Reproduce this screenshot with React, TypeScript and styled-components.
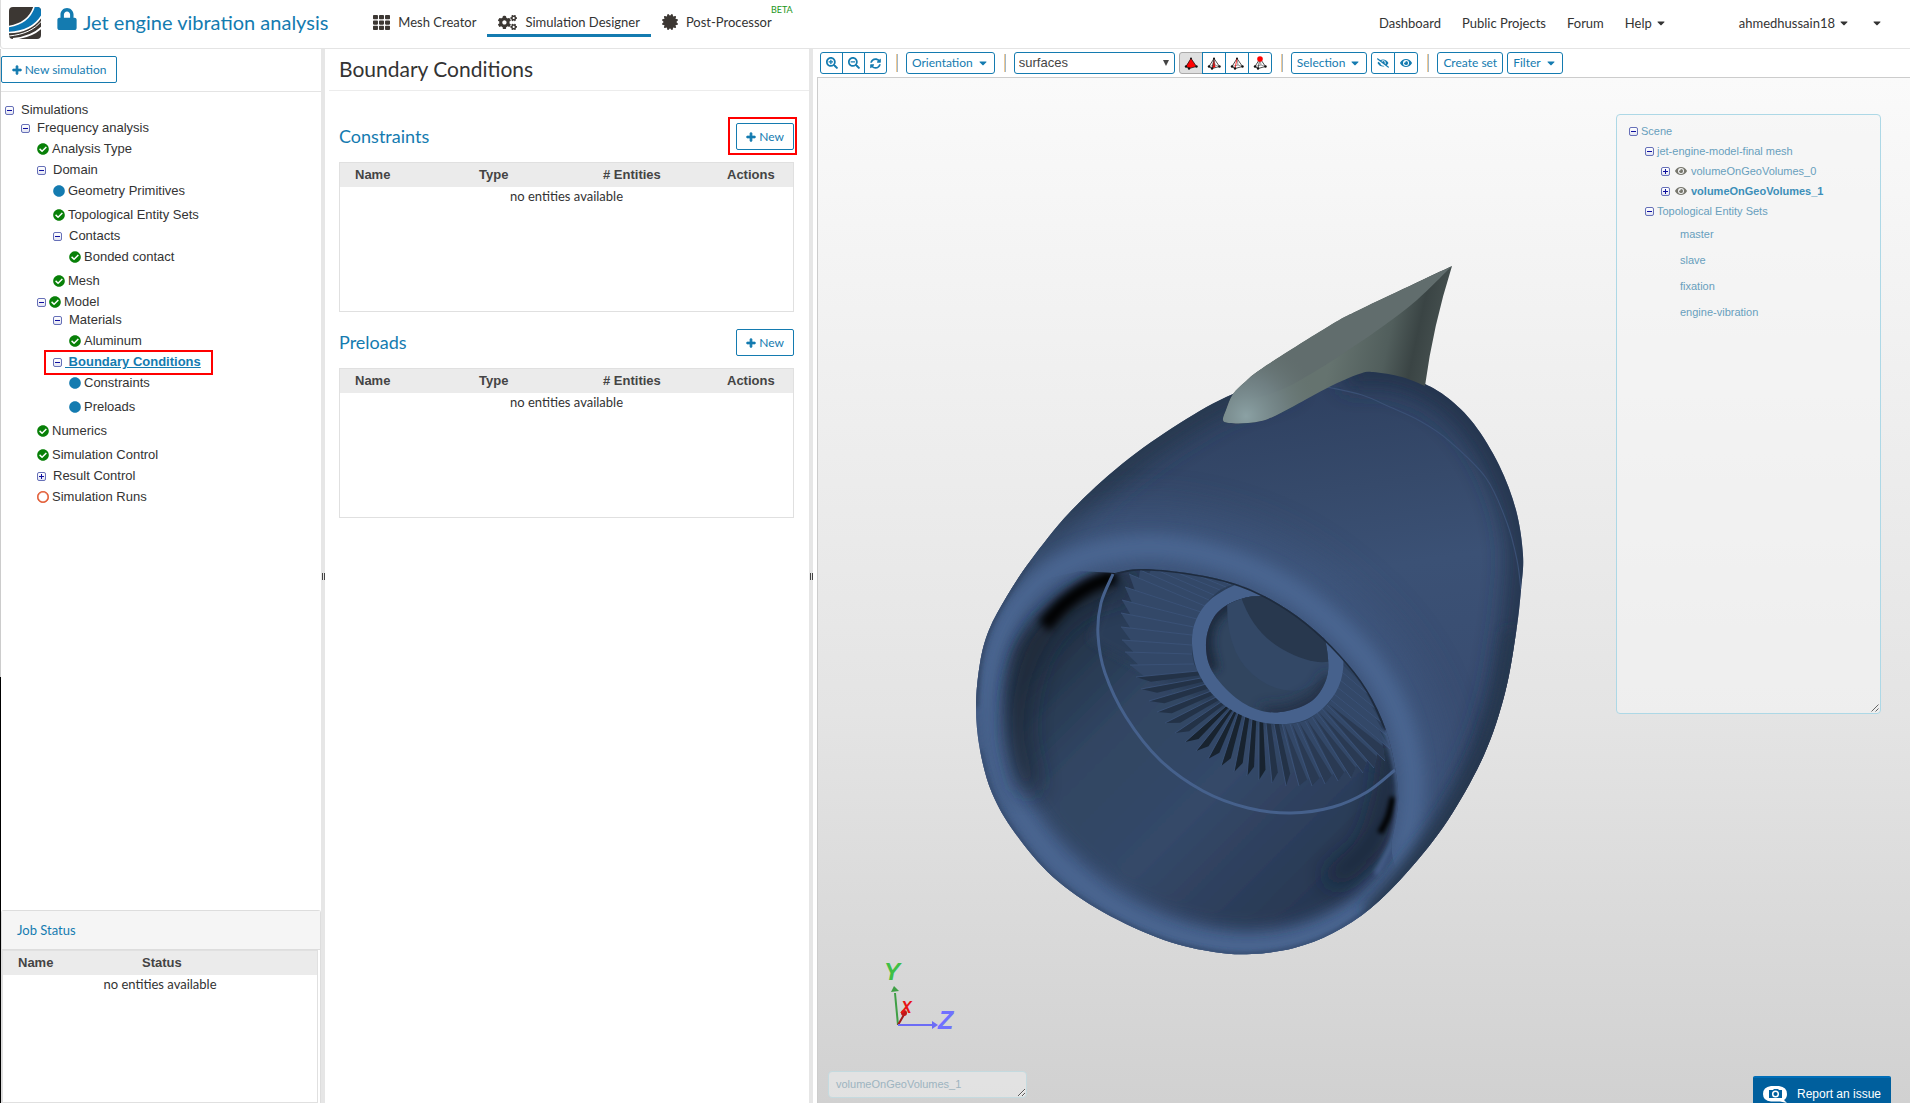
import React from 'react';
import styled, { createGlobalStyle, css } from 'styled-components';
import {
  FaLock, FaTh, FaCogs, FaCertificate, FaPlus, FaCheckCircle, FaCircle, FaRegCircle,
  FaSearchPlus, FaSearchMinus, FaSyncAlt, FaEye, FaEyeSlash, FaCaretDown,
} from 'react-icons/fa';

const BLUE = '#147bb0';
const TEXT = '#333333';
const LATO = 'Lato, "Open Sans", sans-serif';
const ARIAL = '"Liberation Sans", Arial, sans-serif';

const GlobalStyle = createGlobalStyle`
  *, *::before, *::after { box-sizing: border-box; }
  body { margin: 0; background: #fff; color: ${TEXT}; font: 13px/20px ${LATO}; }
  h1, h2, h3, ul { margin: 0; padding: 0; font-weight: 400; }
  ul { list-style: none; }
  a { color: inherit; text-decoration: none; }
  svg { display: block; flex: none; }
  button, select, textarea { font: inherit; color: inherit; }
`;

/* ---------- page frame ---------- */

const Page = styled.div`
  display: flex;
  flex-direction: column;
  height: 100vh;
  overflow: hidden;
`;

const Header = styled.header`
  display: flex;
  align-items: flex-start;
  height: 49px;
  padding: 0 27px 0 8px;
  border-bottom: 1px solid #e4e4e4;
  border-left: 1px solid #ddd;
  border-radius: 0 0 0 4px;
  flex: none;
`;

const Columns = styled.div`
  display: grid;
  grid-template-columns: 321px 4px 484px 4px 1fr;
  flex: 1;
  min-height: 0;
`;

const Splitter = styled.div`
  display: flex;
  align-items: center;
  justify-content: center;
  gap: 1px;
  background: #e6e6e6;
  i { width: 1px; height: 7px; background: #444; }
`;

/* ---------- header ---------- */

const Logo = styled.a`
  padding-top: 7px;
`;

const Title = styled.h1`
  display: flex;
  gap: 5px;
  margin-left: 15px;
  padding-top: 8px;
  color: ${BLUE};
  font-size: 20px;
  line-height: 28px;
`;

const MainNav = styled.nav`
  display: flex;
  margin-left: 34px;
`;

const NavItem = styled.a<{ $active?: boolean }>`
  position: relative;
  display: flex;
  align-items: center;
  gap: 8px;
  height: 37px;
  padding: 12px 11px 2px;
  border-bottom: 3px solid ${p => (p.$active ? BLUE : 'transparent')};
`;

const Beta = styled.sup`
  position: absolute;
  top: 4px;
  right: -10px;
  color: #1a961a;
  font-size: 9px;
  line-height: 12px;
`;

const UserNav = styled.nav`
  display: flex;
  gap: 21px;
  margin-left: auto;
  padding-top: 13px;
  a { display: flex; align-items: center; gap: 3px; }
`;

const UserLink = styled.a`
  margin-left: 51px;
`;

const MenuToggle = styled.button`
  margin: 0;
  padding: 0;
  border: 0;
  background: none;
`;

/* ---------- shared controls ---------- */

const Button = styled.button`
  display: flex;
  align-items: center;
  justify-content: center;
  gap: 3px;
  height: 27px;
  padding: 0 10px;
  border: 1px solid ${BLUE};
  border-radius: 2px;
  background: #fff;
  color: ${BLUE};
  font-size: 12px;
  line-height: 18px;
  white-space: nowrap;
`;

const RedFrame = css`
  &::after {
    content: '';
    position: absolute;
    border: 2px solid #f00;
    pointer-events: none;
  }
`;

/* ---------- simulation tree ---------- */

const Sidebar = styled.aside`
  display: flex;
  flex-direction: column;
  min-height: 0;
  border-left: 1px solid #ccc;
  border-image: linear-gradient(#ccc 0 628px, #000 628px) 1;
`;

const SidebarTop = styled.div`
  display: flex;
  padding: 7px 0 8px;
  border-bottom: 1px solid #e4e4e4;
`;

const NewSimulation = styled(Button)`
  width: 116px;
`;

const Tree = styled.ul`
  flex: 1;
  padding-top: 9px;
  font: 13px/18px ${ARIAL};
`;

const TreeRow = styled.li<{ $level: number; $leaf: boolean; $selected?: boolean }>`
  position: relative;
  display: flex;
  align-items: center;
  width: max-content;
  height: ${p => (p.$leaf ? 24 : 18)}px;
  margin-left: ${p => 4 + p.$level * 16}px;
  svg + a { margin-left: 3px; }
  button + a { margin-left: 7px; }
  button + svg { margin-left: 3px; }
  ${p => p.$selected && css`
    color: ${BLUE};
    font-weight: 700;
    button + a { margin-left: 3px; text-decoration: underline; white-space: pre; }
    ${RedFrame}
    &::after { inset: -3px -12px -4px -9px; }
  `}
`;

const Toggle = styled.button`
  display: flex;
  align-items: center;
  justify-content: center;
  width: 9px;
  height: 9px;
  padding: 0;
  border: 1px solid #6670b8;
  border-radius: 2px;
  background: linear-gradient(#fff, #e2e4f2);
`;

const Expander = ({ open, label }: { open: boolean; label: string }) => (
  <Toggle type="button" aria-label={label} aria-expanded={open}>
    <svg width="5" height="5" viewBox="0 0 5 5" shapeRendering="crispEdges">
      <rect x="0" y="2" width="5" height="1" fill="#1010a0" />
      {!open && <rect x="2" y="0" width="1" height="5" fill="#1010a0" />}
    </svg>
  </Toggle>
);

type Kind = 'open' | 'closed' | 'ok' | 'dot' | 'ring' | 'openOk';
const TREE: { text: string; level: number; kind: Kind; selected?: boolean }[] = [
  { text: 'Simulations', level: 0, kind: 'open' },
  { text: 'Frequency analysis', level: 1, kind: 'open' },
  { text: 'Analysis Type', level: 2, kind: 'ok' },
  { text: 'Domain', level: 2, kind: 'open' },
  { text: 'Geometry Primitives', level: 3, kind: 'dot' },
  { text: 'Topological Entity Sets', level: 3, kind: 'ok' },
  { text: 'Contacts', level: 3, kind: 'open' },
  { text: 'Bonded contact', level: 4, kind: 'ok' },
  { text: 'Mesh', level: 3, kind: 'ok' },
  { text: 'Model', level: 2, kind: 'openOk' },
  { text: 'Materials', level: 3, kind: 'open' },
  { text: 'Aluminum', level: 4, kind: 'ok' },
  { text: 'Boundary Conditions', level: 3, kind: 'open', selected: true },
  { text: 'Constraints', level: 4, kind: 'dot' },
  { text: 'Preloads', level: 4, kind: 'dot' },
  { text: 'Numerics', level: 2, kind: 'ok' },
  { text: 'Simulation Control', level: 2, kind: 'ok' },
  { text: 'Result Control', level: 2, kind: 'closed' },
  { text: 'Simulation Runs', level: 2, kind: 'ring' },
];

/* ---------- tables ---------- */

const JobPanel = styled.section`
  display: flex;
  flex-direction: column;
  height: 193px;
  border: 1px solid #ddd;
  border-bottom: 0;
  border-radius: 3px 3px 0 0;
`;

const JobTitle = styled.h3`
  padding: 9px 15px;
  border-bottom: 1px solid #ddd;
  background: #f5f5f5;
  color: ${BLUE};
  font-size: 13px;
  line-height: 20px;
`;

const TableFrame = styled.div<{ $height?: number }>`
  border: 1px solid #e0e0e0;
  ${p => (p.$height ? `height: ${p.$height}px;` : 'flex: 1; margin-right: 2px;')}
`;

const Table = styled.table<{ $pad: number }>`
  width: 100%;
  border-collapse: collapse;
  table-layout: fixed;
  th {
    width: 124px;
    height: 24px;
    padding: 0 0 0 ${p => p.$pad}px;
    background: #ebebeb;
    color: #444;
    font: 700 13px/18px ${ARIAL};
    text-align: left;
    white-space: nowrap;
  }
  th:last-child { width: auto; }
  td { padding: 0; line-height: 18px; text-align: center; }
`;

const EntityTable = ({ heads, pad, label }: { heads: string[]; pad: number; label: string }) => (
  <Table $pad={pad} aria-label={label}>
    <thead><tr>{heads.map(h => <th key={h} scope="col">{h}</th>)}</tr></thead>
    <tbody><tr><td colSpan={heads.length}>no entities available</td></tr></tbody>
  </Table>
);

/* ---------- middle column ---------- */

const Middle = styled.main`
  padding-left: 4px;
`;

const PanelTitle = styled.h2`
  padding: 6px 10px 7px;
  border-bottom: 1px solid #ececec;
  font-size: 21px;
  line-height: 28px;
`;

const Sections = styled.div`
  display: grid;
  gap: 17px;
  padding: 32px 15px 0 10px;
`;

const SectionHead = styled.div`
  display: flex;
  align-items: flex-start;
  justify-content: space-between;
  margin-bottom: 12px;
  h3 { color: ${BLUE}; font-size: 18px; line-height: 26px; }
`;

const ButtonHolder = styled.div<{ $marked?: boolean }>`
  position: relative;
  width: 58px;
  button { width: 100%; }
  ${p => p.$marked && RedFrame}
  &::after { inset: -6px -3px -5px -8px; }
`;

/* ---------- toolbar ---------- */

const Viewer = styled.section`
  display: flex;
  flex-direction: column;
  min-width: 0;
  padding-left: 4px;
`;

const Toolbar = styled.div`
  display: flex;
  align-items: center;
  height: 28px;
  padding-left: 3px;
  gap: 4px;
`;

const ToolButton = styled(Button)<{ $pressed?: boolean }>`
  height: 22px;
  padding: 0 5px;
  gap: 4px;
  border-radius: 3px;
  ${p => p.$pressed && 'background: #e0e0e0; border-color: #aaa;'}
`;

const Group = styled.div<{ $cell?: number }>`
  display: flex;
  button { width: ${p => p.$cell ?? 24}px; padding: 0; margin-left: -1px; border-radius: 0; }
  button:first-child { margin-left: 0; border-radius: 3px 0 0 3px; }
  button:last-child { border-radius: 0 3px 3px 0; }
`;

const Separator = styled.span`
  width: 2px;
  height: 18px;
  margin: 0 4px 0 5px;
  background: linear-gradient(90deg, #f0c993 50%, #a0b8cc 50%);
`;

const SelectBox = styled.div`
  position: relative;
  width: 161px;
  svg { position: absolute; top: 8px; right: 6px; pointer-events: none; }
`;

const Select = styled.select`
  display: block;
  width: 100%;
  height: 22px;
  padding: 0 4px;
  border: 1px solid ${BLUE};
  border-radius: 3px;
  background: #fff;
  color: #444;
  font: 13px/18px ${ARIAL};
  appearance: none;
`;

const PICK = ['volume', 'face', 'edge', 'node'] as const;
const PickIcon = ({ kind }: { kind: (typeof PICK)[number] }) => (
  <svg width="14" height="14" viewBox="0 0 14 14">
    {kind === 'volume' && <path d="M7 2 L2 10 L5 12.500 L12.500 10.500Z" fill="#f00" />}
    {kind === 'face' && <path d="M7 2 L5 12.500 L8.500 11 Z" fill="#f00" />}
    <path d="M7 2.500 L2 10.500 L5 12.500 L12.500 10.500 Z" fill="none" stroke="#222" strokeWidth="0.800" />
    {kind !== 'volume' && <path d="M2 10.500 L8 9 L12.500 10.500 M7 2.500 L8 9" stroke="#555" strokeWidth="0.600" fill="none" />}
    <path d="M7 2.500 L5 12.500" stroke={kind === 'edge' || kind === 'volume' ? '#f00' : '#333'} strokeWidth="0.800" />
    <g fill="#111"><circle cx="7" cy="2.500" r="1" /><circle cx="2" cy="10.500" r="1.200" /><circle cx="5" cy="12.500" r="1.200" /><circle cx="12.500" cy="10.500" r="1.200" /></g>
    {kind === 'node' && <circle cx="7" cy="3" r="2.800" fill="#f00" />}
  </svg>
);

/* ---------- viewport ---------- */

const Viewport = styled.div`
  position: relative;
  flex: 1;
  min-height: 0;
  border: solid #ccc;
  border-width: 1px 0 0 1px;
  background: linear-gradient(#fafafa, #e4e4e4 62%, #d1d1d1);
  overflow: hidden;
`;

const Scene = styled.svg`
  position: absolute;
  inset: 0;
  width: 100%;
  height: 100%;
`;

const ScenePanel = styled.div`
  position: absolute;
  top: 36px;
  right: 29px;
  width: 265px;
  height: 600px;
  padding: 6px 12px;
  border: 1px solid #add8e6;
  border-radius: 4px;
  background: rgba(245, 245, 245, 0.6);
  color: #689fbd;
  font: 11px/20px ${ARIAL};
`;

const SceneRow = styled.li<{ $indent: number; $tall?: boolean; $bold?: boolean }>`
  display: flex;
  align-items: center;
  gap: 3px;
  height: ${p => (p.$tall ? 26 : 20)}px;
  padding-left: ${p => p.$indent}px;
  ${p => p.$bold && 'font-weight: 700; color: #3c8fb9;'}
  svg + a { margin-left: 1px; }
  button + svg { margin-left: 2px; }
`;

const Corner = styled.svg`
  position: absolute;
  right: 1px;
  bottom: 1px;
`;

const Grip = () => (
  <Corner width="8" height="8" viewBox="0 0 8 8">
    <path d="M0.500 7.500 L7.500 0.500 M4.500 7.500 L7.500 4.500" stroke="#666" fill="none" />
  </Corner>
);

const Info = styled.textarea`
  position: absolute;
  left: 10px;
  bottom: 5px;
  width: 199px;
  height: 27px;
  padding: 3px 7px;
  border: 1px solid #c4dadf;
  border-radius: 4px;
  background: rgba(250, 250, 250, 0.4);
  color: #9db4c0;
  font: 11px/18px ${ARIAL};
  overflow: hidden;
`;

const Report = styled.button`
  position: absolute;
  right: 19px;
  bottom: -7px;
  display: flex;
  align-items: center;
  gap: 10px;
  width: 138px;
  height: 34px;
  padding: 0 10px;
  border: 0;
  border-top: 2px solid #006eb8;
  border-radius: 2px 2px 0 0;
  background: #005f9d;
  color: #fff;
  font: 12px/18px ${ARIAL};
  white-space: nowrap;
`;

/* ---------- engine model drawing ---------- */

type P = [number, number];

/** Smooth curve through the points (Catmull-Rom turned into Béziers). */
const curve = (pts: P[], closed = false) => {
  const n = pts.length;
  const at = (i: number) => (closed ? pts[(i + n) % n] : pts[Math.max(0, Math.min(n - 1, i))]);
  let d = `M${pts[0][0]} ${pts[0][1]}`;
  for (let i = 0; i < (closed ? n : n - 1); i++) {
    const [a, b, c, e] = [at(i - 1), at(i), at(i + 1), at(i + 2)];
    d += `C${b[0] + (c[0] - a[0]) / 6} ${b[1] + (c[1] - a[1]) / 6} ${c[0] - (e[0] - b[0]) / 6} ${c[1] - (e[1] - b[1]) / 6} ${c[0]} ${c[1]}`;
  }
  return closed ? d + 'Z' : d;
};

const BACK_LEFT: P[] = [[976, 707], [980, 663], [989, 630], [1007, 596], [1031, 560], [1070, 512], [1122, 464], [1180, 423], [1233, 394], [1290, 376]];
const BACK_RIGHT: P[] = [[1345, 374], [1373, 371], [1402, 375], [1425, 384], [1448, 398], [1474, 424], [1499, 465], [1516, 510], [1523, 555], [1521, 590], [1516, 633], [1505, 693], [1484, 755], [1448, 820], [1409, 870]];
const FRONT_LOW: P[] = [[1371, 908], [1333, 933], [1294, 948], [1252, 954], [1214, 952], [1164, 940], [1103, 912], [1053, 877], [1015, 833], [992, 793], [980, 750]];
const BODY = curve([...BACK_LEFT, ...BACK_RIGHT, ...FRONT_LOW], true);

const LIP: P[] = [[990, 707], [997, 650], [1024, 598], [1072, 562], [1140, 547], [1200, 553], [1265, 576], [1322, 614], [1370, 664], [1400, 720], [1412, 785], [1402, 850], [1374, 897], [1332, 926], [1280, 944], [1220, 944], [1150, 925], [1090, 890], [1038, 840], [1003, 780]];
const EDGE: P[] = [[1053, 607], [1084, 584], [1115, 573], [1141, 569], [1187, 573], [1233, 583], [1268, 598], [1306, 623], [1340, 655], [1367, 690], [1386, 730], [1396, 773], [1398, 805], [1392, 840]];
const CRISP = EDGE.slice(2);
const INNER = curve([...EDGE, [1376, 870], [1346, 899], [1302, 920], [1245, 928], [1185, 917], [1122, 886], [1066, 839], [1024, 780], [1008, 715], [1012, 660], [1028, 629]], true);
const MOUTH = `M1040 580L1080 571L${curve(CRISP).slice(1)}Q1388 870 1420 900L1360 960L1200 970L1000 900L950 700L980 620Z`;

const FIN_OUTLINE = curve([[1452, 266], [1363, 308], [1329, 326], [1264, 367], [1245, 382], [1233, 394], [1226, 410], [1223, 420], [1229, 423], [1248, 423], [1268, 419], [1294, 406], [1329, 387], [1359, 374], [1373, 372], [1402, 377], [1425, 386]])
  + 'Q1433 326 1452 266Z';
const FIN_TOP = curve([[1452, 266], [1417, 300], [1382, 327], [1344, 353], [1314, 372], [1285, 388], [1255, 398], [1233, 398], [1245, 382], [1264, 367], [1329, 326], [1363, 308], [1452, 266]]);

const TIPS: P[] = [
  [1186, 566], [1175, 566], [1163, 567], [1152, 568], [1140, 570], [1129, 574], [1125, 587], [1122, 600], [1121, 613], [1121, 627], [1122, 640], [1125, 652], [1130, 665],
  [1136, 677], [1141, 689], [1149, 701], [1157, 712], [1165, 723], [1175, 733], [1185, 742], [1196, 751], [1208, 759], [1221, 766],
  [1234, 772], [1247, 776], [1259, 780], [1272, 783], [1286, 786], [1299, 786], [1312, 786], [1325, 784], [1338, 781], [1351, 778],
  [1363, 773], [1374, 768], [1385, 761], [1390, 749], [1386, 735], [1381, 722], [1375, 708], [1368, 694], [1360, 682],
];
const BASES: P[] = [
  [1231, 585], [1226, 587], [1220, 590], [1214, 595], [1209, 600], [1205, 606], [1201, 612], [1197, 619], [1194, 627], [1192, 635], [1192, 645], [1192, 654], [1194, 664],
  [1198, 671], [1201, 678], [1206, 684], [1211, 691], [1216, 697], [1221, 702], [1226, 706], [1230, 709], [1234, 711], [1238, 713],
  [1245, 716], [1252, 719], [1259, 722], [1266, 723], [1274, 724], [1282, 724], [1290, 724], [1297, 723], [1305, 721], [1312, 717],
  [1317, 713], [1322, 709], [1327, 705], [1331, 700], [1334, 694], [1337, 687], [1340, 680], [1342, 672], [1343, 665],
];
const mix = (a: P, b: P, t: number): P => [a[0] + (b[0] - a[0]) * t, a[1] + (b[1] - a[1]) * t];
const poly = (pts: P[]) => pts.map(p => p.join(',')).join(' ');

const Blades = () => (
  <g>
    {TIPS.slice(0, -1).map((tip, i) => {
      const open = i > 12 && i < 28;
      const notch = mix(TIPS[i + 1], BASES[i + 1], 0.13);
      const dark = i > 18 && i < 26 ? '#18232f' : '#233247';
      return (
        <g key={i}>
          {!open && <polygon points={poly([tip, BASES[i], BASES[i + 1], notch])} fill="#334868" />}
          {open && <polygon points={poly([tip, mix(mix(tip, BASES[i], 0.2), mix(TIPS[i + 1], BASES[i + 1], 0.2), 0.55), mix(BASES[i], BASES[i + 1], 0.6), BASES[i]])} fill={dark} />}
          {i >= 28 && i < 36 && <polygon points={poly([tip, mix(notch, tip, 0.2), mix(BASES[i], BASES[i + 1], 0.3)])} fill="#2a3a53" />}
          <path d={`M${tip.join(' ')}L${BASES[i].join(' ')}`} stroke="#3e567c" strokeWidth="0.800" />
        </g>
      );
    })}
  </g>
);

const HUB: P[] = [[1235, 585], [1210, 600], [1196, 620], [1192, 643], [1198, 672], [1217, 699], [1245, 717], [1275, 724], [1305, 720], [1328, 703], [1341, 680], [1343, 652], [1335, 620], [1300, 590], [1262, 578]];
const BORE: P[] = [[1262, 596], [1233, 602], [1214, 617], [1206, 643], [1212, 671], [1236, 698], [1262, 711], [1287, 711], [1313, 700], [1327, 677], [1327, 650], [1320, 628], [1300, 605]];
const RING: P[] = [[1113, 574], [1101, 603], [1098, 635], [1105, 673], [1126, 717], [1160, 760], [1203, 791], [1248, 808], [1291, 813], [1333, 807], [1367, 792], [1395, 770]];

const Blur = ({ id, amount }: { id: string; amount: number }) => (
  <filter id={id} filterUnits="userSpaceOnUse" x="900" y="250" width="720" height="780">
    <feGaussianBlur stdDeviation={amount} />
  </filter>
);

const EngineScene = () => (
  <Scene viewBox="818 78 1092 1025" role="img" aria-label="Jet engine model">
    <defs>
      <Blur id="b2" amount={2} />
      <Blur id="b4" amount={4} />
      <Blur id="b7" amount={7} />
      <Blur id="b12" amount={12} />
      <Blur id="b20" amount={20} />
      <linearGradient id="shell" gradientUnits="userSpaceOnUse" x1="1330" y1="375" x2="1380" y2="700">
        <stop offset="0" stopColor="#2e4060" /><stop offset="0.350" stopColor="#364a6b" />
        <stop offset="0.600" stopColor="#3b5175" /><stop offset="1" stopColor="#394d71" />
      </linearGradient>
      <linearGradient id="duct" gradientUnits="userSpaceOnUse" x1="1040" y1="620" x2="1330" y2="910">
        <stop offset="0" stopColor="#1f2d3f" /><stop offset="0.300" stopColor="#304562" />
        <stop offset="0.600" stopColor="#344868" /><stop offset="1" stopColor="#263650" />
      </linearGradient>
      <linearGradient id="finSide" gradientUnits="userSpaceOnUse" x1="1330" y1="360" x2="1445" y2="385">
        <stop offset="0" stopColor="#65736f" /><stop offset="0.450" stopColor="#515e5c" />
        <stop offset="0.680" stopColor="#3a4444" /><stop offset="1" stopColor="#4c5756" />
      </linearGradient>
      <radialGradient id="finNose" gradientUnits="userSpaceOnUse" cx="1246" cy="416" r="75">
        <stop offset="0" stopColor="#8ba1a4" /><stop offset="0.500" stopColor="#75868a" stopOpacity="0.700" />
        <stop offset="1" stopColor="#65736f" stopOpacity="0" />
      </radialGradient>
      <clipPath id="bodyClip"><path d={BODY} /></clipPath>
      <clipPath id="mouthClip"><path d={MOUTH} /></clipPath>
      <clipPath id="boreClip"><path d={curve(BORE, true)} /></clipPath>
      <clipPath id="finClip"><path d={FIN_OUTLINE} /></clipPath>
    </defs>

    <path d={BODY} fill="url(#shell)" />
    <g clipPath="url(#bodyClip)" fill="none">
      <path d={curve(BACK_LEFT.slice(3))} stroke="#26374e" strokeWidth="30" filter="url(#b12)" />
      <path d={curve(BACK_RIGHT)} stroke="#22324a" strokeWidth="28" filter="url(#b12)" />
      <path d={curve(LIP, true)} stroke="#3f5880" strokeWidth="70" filter="url(#b20)" opacity="0.800" />
      <path d={curve(LIP, true)} stroke="#496590" strokeWidth="24" filter="url(#b7)" />
      <path d={curve([...BACK_LEFT.slice(0, 5)])} stroke="#304563" strokeWidth="4" filter="url(#b2)" />
      <path d={curve(FRONT_LOW)} stroke="#344b6e" strokeWidth="4" filter="url(#b2)" />
      <path d={curve([[1371, 915], [1409, 872], [1448, 822], [1486, 754], [1505, 693], [1516, 633]])} stroke="#263750" strokeWidth="22" filter="url(#b7)" />
      <path d={curve([[1327, 387], [1362, 395], [1390, 407], [1420, 421], [1448, 440], [1486, 478], [1507, 523], [1517, 560], [1521, 590]])} stroke="#3a5075" strokeWidth="1.200" />
    </g>

    <g clipPath="url(#bodyClip)">
      <g clipPath="url(#mouthClip)">
        <path d={INNER} fill="url(#duct)" filter="url(#b7)" />
        <path d={curve(CRISP.slice(0, -2)) + 'L1360 760L1200 700L1090 640Z'} fill="#2c3e58" filter="url(#b4)" />
        <g fill="none">
          <path d={curve([[1030, 790], [1018, 735], [1024, 680], [1044, 634], [1080, 600], [1130, 584]])} stroke="#1a2635" strokeWidth="18" filter="url(#b12)" opacity="0.850" />
          <path d={curve([[1044, 626], [1064, 604], [1090, 586], [1116, 576]])} stroke="#000" strokeWidth="15" filter="url(#b4)" />
          <path d={curve([[1393, 740], [1386, 800], [1368, 848], [1330, 880]])} stroke="#182433" strokeWidth="16" filter="url(#b12)" />
          <path d={curve([[1393, 797], [1388, 817], [1380, 833]])} stroke="#000" strokeWidth="6" filter="url(#b2)" />
        </g>
        <path d={curve(RING)} fill="none" stroke="#46618c" strokeWidth="3" />
        <Blades />
        <path d={curve(HUB, true)} fill="#46618c" />
        <path d={curve(BORE, true)} fill="#31455f" />
        <g clipPath="url(#boreClip)">
          <path d={curve([[1262, 596], [1233, 602], [1212, 619], [1206, 643], [1212, 671]])} fill="none" stroke="#1d2a3c" strokeWidth="14" filter="url(#b4)" />
          <path d="M1228 590Q1222 655 1260 680T1330 672V580Z" fill="#334866" />
          <path d={curve([[1262, 715], [1290, 713], [1320, 697], [1332, 677]])} fill="none" stroke="#202e44" strokeWidth="16" filter="url(#b7)" />
          <path d="M1240 594Q1252 632 1282 649T1332 661V580Z" fill="#28384e" />
        </g>
        <path d={curve(CRISP.slice(0, -3))} fill="none" stroke="#1e2b3e" strokeWidth="3" />
        <path d={curve([[1386, 730], [1397, 773], [1399, 805], [1393, 840], [1376, 874]])} fill="none" stroke="#46618c" strokeWidth="5" filter="url(#b2)" />
      </g>
    </g>

    <path d={FIN_OUTLINE} fill="url(#finSide)" />
    <g clipPath="url(#finClip)">
      <path d={FIN_TOP} fill="#616d6d" />
      <path d={FIN_OUTLINE} fill="url(#finNose)" />
    </g>

    <g fill="none">
      <path d="M898 1025L895 993" stroke="#3f9f45" strokeWidth="2" />
      <path d="M898 1025L905 1013" stroke="#a01c1c" strokeWidth="2" />
      <path d="M898 1025H934" stroke="#6c6cf5" strokeWidth="2" />
    </g>
    <path d="M891 992L894 986L899 991Z" fill="#3f9f45" />
    <path d="M932 1021L938 1025L932 1029Z" fill="#6c6cf5" />
    <circle cx="904" cy="1013" r="3" fill="#c01818" />
    <g fontFamily='"Liberation Sans", sans-serif' fontStyle="italic" fontWeight="700">
      <text x="884" y="980" fontSize="24" fill="#3fbf45">Y</text>
      <text x="901" y="1013" fontSize="16" fill="#e81414">X</text>
      <text x="938" y="1029" fontSize="25" fill="#7070ff">Z</text>
    </g>
  </Scene>
);

/* ---------- app ---------- */

const Caret = () => <FaCaretDown size={12} />;

const StateIcon = ({ kind }: { kind: Kind }) => {
  if (kind === 'ok' || kind === 'openOk') return <FaCheckCircle size={12} color="#088008" />;
  if (kind === 'dot') return <FaCircle size={12} color={BLUE} />;
  if (kind === 'ring') return <FaRegCircle size={12} color="#e0532a" stroke="#e0532a" strokeWidth={20} />;
  return null;
};

const Plus = () => <FaPlus size={10} stroke="currentColor" strokeWidth={40} />;

export default function App() {
  return (
    <Page>
      <GlobalStyle />
      <Header>
        <Logo href="#" aria-label="Home">
          <svg width="32" height="32" viewBox="0 0 32 32">
            <clipPath id="logoClip"><rect width="32" height="32" rx="4" /></clipPath>
            <g clipPath="url(#logoClip)">
              <rect width="32" height="32" fill="#3c3733" />
              <path d="M0 20C12 18 21 12 25 0H33V9C26 20 14 25 0 25Z" fill="#0a76b3" />
              <g fill="none" stroke="#fff" strokeWidth="1.600">
                <path d="M0 19.500C12 17.500 21 12 25 0" />
                <path d="M0 25.500C14 25 26 20 33 8.500" />
                <path d="M0 29C15 27.500 25 23 33 13.500" strokeWidth="1" />
                <path d="M4 32C17 30.500 26 27 33 20" strokeWidth="1.800" />
              </g>
            </g>
          </svg>
        </Logo>
        <Title><FaLock size={22} />Jet engine vibration analysis</Title>
        <MainNav aria-label="Workbench">
          <NavItem href="#"><FaTh size={17} color="#3c3733" />Mesh Creator</NavItem>
          <NavItem href="#" $active aria-current="page"><FaCogs size={19} color="#3c3733" />Simulation Designer</NavItem>
          <NavItem href="#"><FaCertificate size={16} color="#3c3733" />Post-Processor<Beta>BETA</Beta></NavItem>
        </MainNav>
        <UserNav aria-label="Account">
          <a href="#">Dashboard</a>
          <a href="#">Public Projects</a>
          <a href="#">Forum</a>
          <a href="#">Help <Caret /></a>
          <UserLink href="#">ahmedhussain18 <Caret /></UserLink>
          <MenuToggle type="button" aria-label="More"><Caret /></MenuToggle>
        </UserNav>
      </Header>

      <Columns>
        <Sidebar>
          <SidebarTop><NewSimulation type="button"><Plus />New simulation</NewSimulation></SidebarTop>
          <Tree>
            {TREE.map((n, i) => {
              const folder = n.kind === 'open' || n.kind === 'closed' || n.kind === 'openOk';
              return (
                <TreeRow key={i} $level={n.level} $leaf={!folder} $selected={n.selected}>
                  {folder && <Expander open={n.kind !== 'closed'} label={`Toggle ${n.text}`} />}
                  <StateIcon kind={n.kind} />
                  <a href="#">{n.selected ? ` ${n.text}` : n.text}</a>
                </TreeRow>
              );
            })}
          </Tree>
          <JobPanel>
            <JobTitle>Job Status</JobTitle>
            <TableFrame><EntityTable heads={['Name', 'Status']} pad={15} label="Job status" /></TableFrame>
          </JobPanel>
        </Sidebar>

        <Splitter><i /><i /></Splitter>

        <Middle>
          <PanelTitle>Boundary Conditions</PanelTitle>
          <Sections>
            {['Constraints', 'Preloads'].map((name, i) => (
              <section key={name}>
                <SectionHead>
                  <h3>{name}</h3>
                  <ButtonHolder $marked={i === 0}><Button type="button"><Plus />New</Button></ButtonHolder>
                </SectionHead>
                <TableFrame $height={150}>
                  <EntityTable heads={['Name', 'Type', '# Entities', 'Actions']} pad={15} label={name} />
                </TableFrame>
              </section>
            ))}
          </Sections>
        </Middle>

        <Splitter><i /><i /></Splitter>

        <Viewer>
          <Toolbar>
            <Group $cell={23}>
              <ToolButton type="button" aria-label="Zoom in"><FaSearchPlus size={12} /></ToolButton>
              <ToolButton type="button" aria-label="Zoom out"><FaSearchMinus size={12} /></ToolButton>
              <ToolButton type="button" aria-label="Refresh"><FaSyncAlt size={11} /></ToolButton>
            </Group>
            <Separator />
            <ToolButton type="button">Orientation <Caret /></ToolButton>
            <Separator />
            <SelectBox>
              <Select aria-label="Render mode" defaultValue="surfaces"><option>surfaces</option></Select>
              <svg width="6" height="6" viewBox="0 0 6 6"><path d="M0 0H6L3 6Z" fill="#444" /></svg>
            </SelectBox>
            <Group>
              {PICK.map(k => (
                <ToolButton key={k} type="button" aria-label={`Pick ${k}`} $pressed={k === 'volume'}><PickIcon kind={k} /></ToolButton>
              ))}
            </Group>
            <Separator />
            <ToolButton type="button">Selection <Caret /></ToolButton>
            <Group>
              <ToolButton type="button" aria-label="Hide"><FaEyeSlash size={12} /></ToolButton>
              <ToolButton type="button" aria-label="Show"><FaEye size={12} /></ToolButton>
            </Group>
            <Separator />
            <ToolButton type="button">Create set</ToolButton>
            <ToolButton type="button">Filter <Caret /></ToolButton>
          </Toolbar>
          <Viewport>
            <EngineScene />
            <ScenePanel>
              <ul>
                <SceneRow $indent={0}><Expander open label="Toggle Scene" /><a href="#">Scene</a></SceneRow>
                <SceneRow $indent={16}><Expander open label="Toggle mesh" /><a href="#">jet-engine-model-final mesh</a></SceneRow>
                <SceneRow $indent={32}><Expander open={false} label="Toggle volume 0" /><FaEye size={12} color="#77776e" /><a href="#">volumeOnGeoVolumes_0</a></SceneRow>
                <SceneRow $indent={32} $bold><Expander open={false} label="Toggle volume 1" /><FaEye size={12} color="#77776e" /><a href="#">volumeOnGeoVolumes_1</a></SceneRow>
                <SceneRow $indent={16}><Expander open label="Toggle sets" /><a href="#">Topological Entity Sets</a></SceneRow>
                {['master', 'slave', 'fixation', 'engine-vibration'].map(s => (
                  <SceneRow key={s} $indent={51} $tall><a href="#">{s}</a></SceneRow>
                ))}
              </ul>
              <Grip />
            </ScenePanel>
            <Info aria-label="Selected entity" readOnly defaultValue="volumeOnGeoVolumes_1" />
            <Report type="button">
              <svg width="24" height="17" viewBox="0 0 24 17">
                <path d="M8 0H16Q24 1 24 8Q24 12 21 14L24 17L17 15.500H8Q0 15 0 8T8 0Z" fill="#fff" />
                <path d="M6 4H10L11 3H15L16 4H19V12H6Z" fill="#005f9d" />
                <circle cx="12.500" cy="8" r="2.800" fill="none" stroke="#fff" strokeWidth="1.500" />
              </svg>
              Report an issue
            </Report>
          </Viewport>
        </Viewer>
      </Columns>
    </Page>
  );
}
